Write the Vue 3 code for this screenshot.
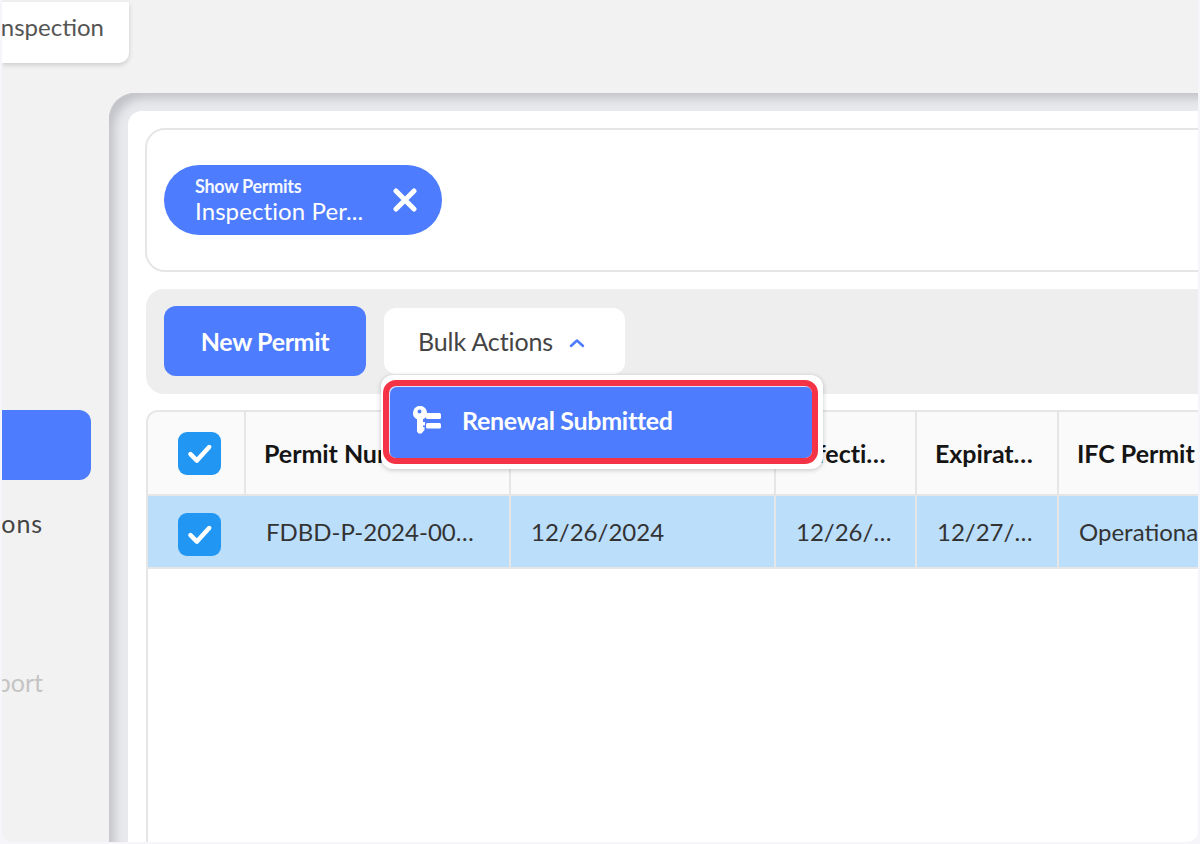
<script setup>
const columns = [
  { head: 'Permit Number', value: 'FDBD-P-2024-00123' },
  { head: 'Issue Date', value: '12/26/2024' },
  { head: 'Effective Date', value: '12/26/2024' },
  { head: 'Expiration Date', value: '12/27/2025' },
  { head: 'IFC Permit Type', value: 'Operational' },
]
</script>

<template>
  <div class="page">
    <div class="tabs">
      <div class="tab"><span>Inspection</span></div>
    </div>

    <div class="body">
      <!-- Sidebar, mostly cut off on the left -->
      <aside class="side">
        <div class="side-active"></div>
        <div class="side-item">Applications</div>
        <div class="side-item muted">Support</div>
      </aside>

      <main class="panel">
        <div class="content">
          <div class="filters">
            <div class="chip">
              <div class="chip-text">
                <div class="chip-label">Show Permits</div>
                <div class="chip-value">Inspection Per...</div>
              </div>
              <svg class="chip-close" viewBox="0 0 24 24">
                <path d="M3 3 21 21M21 3 3 21" />
              </svg>
            </div>
          </div>

          <div class="toolbar">
            <button class="btn-new">New Permit</button>
            <div class="bulk-wrap">
              <button class="btn-bulk">
                Bulk Actions
                <svg class="chevron" viewBox="0 0 16 10">
                  <path d="M2 8 8 2.500 14 8" />
                </svg>
              </button>

              <!-- Open menu -->
              <div class="menu">
                <div class="menu-item">
                  <svg class="key-icon" viewBox="0 0 28 28">
                    <path
                      fill-rule="evenodd"
                      d="M7 0a7 7 0 0 1 3 13.300V16h2v3.500h-2V21h1.500v3L8.500 27.500h-3L4 25.500V13.300A7 7 0 0 1 7 0Zm-.5 3.500a2 2 0 1 0 0 4 2 2 0 0 0 0-4Z"
                    />
                    <rect x="13" y="7" width="15" height="6" rx="1.500" />
                    <rect x="13" y="17" width="15" height="5.500" rx="1.500" />
                  </svg>
                  <span>Renewal Submitted</span>
                </div>
              </div>
            </div>
          </div>

          <div class="table">
            <div class="tr thead">
              <div class="td check-cell">
                <span class="check">
                  <svg viewBox="0 0 24 24"><path d="M5 12.500 10 17.500 19.500 7" /></svg>
                </span>
              </div>
              <div v-for="c in columns" :key="c.head" class="td">
                <span class="cell-text">{{ c.head }}</span>
              </div>
            </div>
            <div class="tr selected">
              <div class="td check-cell">
                <span class="check">
                  <svg viewBox="0 0 24 24"><path d="M5 12.500 10 17.500 19.500 7" /></svg>
                </span>
              </div>
              <div v-for="c in columns" :key="c.head" class="td">
                <span class="cell-text">{{ c.value }}</span>
              </div>
            </div>
          </div>
        </div>
      </main>
    </div>
  </div>
</template>

<style>
html,
body {
  margin: 0;
  background: #f5f5fa;
}
</style>

<style scoped>
.page {
  width: 1196px;
  height: 842px;
  margin-left: 2px;
  background: #f2f2f3;
  border-radius: 0 0 10px 10px;
  display: flex;
  flex-direction: column;
  overflow: hidden;
  font-family: Lato, 'Open Sans', sans-serif;
  color: #222;
}

/* Top tab */
.tabs {
  height: 63px;
  flex: none;
}

.tab {
  width: 127px;
  height: 61px;
  margin-top: 2px;
  box-sizing: border-box;
  background: #fff;
  border-radius: 0 0 10px 0;
  box-shadow: 0 2px 5px rgba(0, 0, 0, 0.16);
  display: flex;
  justify-content: flex-end;
  padding: 9px 25px 0 0;
  overflow: hidden;
  font-size: 24px;
  line-height: 32px;
  color: #555;
}

.tab span {
  flex: none;
}

.body {
  flex: 1;
  display: flex;
  padding-top: 30px;
  min-height: 0;
}

/* Sidebar */
.side {
  width: 107px;
  flex: none;
  padding-top: 317px;
  box-sizing: border-box;
  overflow: hidden;
}

.side-active {
  width: 89px;
  height: 70px;
  background: #4d7cfe;
  border-radius: 0 12px 12px 0;
}

.side-item {
  width: 41px;
  display: flex;
  justify-content: flex-end;
  margin-top: 28px;
  font-size: 25px;
  line-height: 30px;
  letter-spacing: 0.9px;
  white-space: nowrap;
  color: #444;
}

.side-item.muted {
  margin-top: 129px;
  letter-spacing: 0;
  color: #c4c4c4;
}

/* Main panel */
.panel {
  flex: 1;
  min-width: 0;
  padding: 18px 0 0 19px;
  background: #e8e9ec;
  border-radius: 26px 0 0 0;
  box-shadow:
    inset 1px 1px 0 #c6c8cc,
    inset 10px 10px 10px -5px rgba(120, 124, 132, 0.35);
}

.content {
  height: 100%;
  box-sizing: border-box;
  padding: 17px 0 0 17px;
  background: #fff;
  border-radius: 14px 0 0 0;
  overflow: hidden;
}

.filters {
  height: 144px;
  margin-right: -20px;
  box-sizing: border-box;
  border: 2px solid #e6e6e6;
  border-radius: 20px;
  padding: 35px 17px;
}

.chip {
  width: 278px;
  height: 70px;
  box-sizing: border-box;
  padding: 1px 25px 0 31px;
  border-radius: 35px;
  background: #4d7cfe;
  color: #fff;
  display: flex;
  align-items: center;
  justify-content: space-between;
}

.chip-label {
  font-size: 18px;
  line-height: 20px;
  font-weight: 700;
  letter-spacing: -0.3px;
  opacity: 0.95;
}

.chip-value {
  font-size: 24px;
  line-height: 30px;
  letter-spacing: 0.1px;
}

.chip-close {
  width: 24px;
  height: 24px;
  margin-top: -1px;
  fill: none;
  stroke: #fff;
  stroke-width: 5;
  stroke-linecap: round;
}

/* Toolbar */
.toolbar {
  height: 105px;
  margin: 17px -20px 16px 1px;
  padding: 17px 18px;
  box-sizing: border-box;
  background: #eee;
  border-radius: 18px;
  display: flex;
  align-items: flex-start;
  gap: 18px;
}

.btn-new {
  width: 202px;
  height: 70px;
  border: 0;
  border-radius: 12px;
  background: #4d7cfe;
  color: #fff;
  font-family: inherit;
  font-size: 25px;
  font-weight: 700;
  letter-spacing: -0.35px;
}

.bulk-wrap {
  position: relative;
  margin-top: 2px;
}

.btn-bulk {
  width: 241px;
  height: 66px;
  border: 0;
  border-radius: 12px;
  background: #fff;
  color: #444;
  font-family: inherit;
  font-size: 25px;
  letter-spacing: -0.12px;
  display: flex;
  align-items: center;
  padding: 0 0 0 34px;
  gap: 16px;
}

.chevron {
  width: 16px;
  height: 10px;
  margin-top: 4px;
  fill: none;
  stroke: #4d7cfe;
  stroke-width: 2.500;
  stroke-linecap: round;
  stroke-linejoin: round;
}

/* Dropdown with the red highlight round its item */
.menu {
  position: absolute;
  z-index: 2;
  top: 67px;
  left: -3px;
  width: 442px;
  height: 94px;
  box-sizing: border-box;
  padding: 5px 5px 5px 2px;
  background: #fff;
  border-radius: 12px;
  box-shadow: 0 1px 5px rgba(0, 0, 0, 0.22);
}

.menu-item {
  height: 100%;
  box-sizing: border-box;
  border: 6px solid #f53346;
  border-radius: 13px;
  padding-bottom: 4px;
  display: flex;
  align-items: center;
  color: #fff;
  font-size: 25px;
  font-weight: 700;
  letter-spacing: -0.3px;
  background: #4d7cfe;
  background-clip: padding-box;
  box-shadow: inset 1px 1px 0 rgba(255, 255, 255, 0.8);
}

.menu-item span {
  margin-left: 21px;
}

.key-icon {
  width: 28px;
  height: 28px;
  margin-left: 24px;
  fill: #fff;
}

/* Table */
.table {
  margin: 0 -20px 0 1px;
  height: 500px;
  box-sizing: border-box;
  border: 2px solid #e6e6e6;
  border-bottom: 0;
  border-radius: 12px 0 0 0;
  overflow: hidden;
}

.tr {
  display: grid;
  grid-template-columns: 98px 265px 265px 141px 142px 1fr;
}

.thead {
  height: 82px;
  background: #fafafa;
  border-bottom: 2px solid #e6e6e6;
  font-size: 25px;
  font-weight: 700;
  color: #151515;
  letter-spacing: -0.05px;
}

.thead .td {
  padding: 0 18px 0 18px;
}

.selected {
  height: 71px;
  background: #bbdefb;
  border-bottom: 2px solid #e6e6e6;
  font-size: 24px;
  color: #333;
}

.td {
  box-sizing: border-box;
  border-right: 2px solid #e6e6e6;
  padding: 0 22px 0 20px;
  display: flex;
  align-items: center;
  min-width: 0;
}

.thead .check-cell,
.selected .check-cell {
  padding: 0 0 0 30px;
}

.selected .check-cell {
  border-right-color: transparent;
}

.selected .check {
  margin-top: 5px;
}

.cell-text {
  white-space: nowrap;
  overflow: hidden;
  text-overflow: ellipsis;
}

.td:last-child .cell-text {
  overflow: visible;
}

.check {
  width: 43px;
  height: 43px;
  background: #2196f3;
  border-radius: 9px;
  display: flex;
  align-items: center;
  justify-content: center;
}

.check svg {
  width: 31px;
  height: 31px;
  fill: none;
  stroke: #fff;
  stroke-width: 3.500;
  stroke-linecap: round;
  stroke-linejoin: round;
}
</style>
